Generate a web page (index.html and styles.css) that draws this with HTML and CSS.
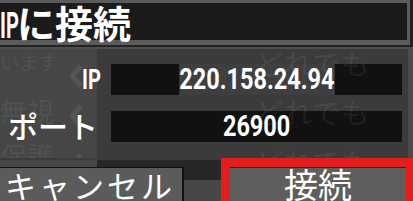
FILE: index.html
```html
<!DOCTYPE html>
<html>
	<head>
		<meta charset="utf-8">
		<title>IPに接続</title>
		<link rel="stylesheet" href="styles.css">
	</head>
	<body>
		<div class="screen">
			<div class="titlebar-wrap">
				<h1 class="titlebar"><span class="latin">IP</span>に接続</h1>
			</div>

			<div class="panel">
				<div class="row">
					<label class="lbl lbl-ip">IP</label>
					<div class="field"><span class="value value-sel">220.158.24.94</span></div>
				</div>
				<div class="row">
					<label class="lbl lbl-port">ポート</label>
					<div class="field"><span class="value">26900</span></div>
				</div>
			</div>

			<!-- menu behind the dialog, showing through -->
			<div class="ghost">
				<span class="g g1">います</span>
				<span class="g g2">無視</span>
				<span class="g g3">保護</span>
				<svg class="chev c1" width="18" height="26" viewBox="0 0 18 26"><polyline points="14,3 5,13 14,23" /></svg>
				<svg class="chev c2" width="18" height="26" viewBox="0 0 18 26"><polyline points="14,3 5,13 14,23" /></svg>
				<svg class="chev c3" width="18" height="26" viewBox="0 0 18 26"><polyline points="14,3 5,13 14,23" /></svg>
				<span class="g any a1">どれでも</span>
				<span class="g any a2">どれでも</span>
				<span class="g any a3">どれでも</span>
			</div>

			<div class="actions">
				<button class="btn btn-cancel">キャンセル</button>
				<button class="btn btn-ok">接続</button>
			</div>
		</div>
	</body>
</html>
```

FILE: styles.css
```css
body {
	margin: 0;
	background-color: #222;
	font-family: "Noto Sans CJK JP", sans-serif;
	color: #fff;
}

.screen {
	position: relative;
	width: 413px;
	height: 201px;
	overflow: hidden;
}

.titlebar-wrap {
	background-color: #222;
	padding: 0 3px 2px 0;
}

.titlebar {
	margin: 0;
	height: 45px;
	box-sizing: border-box;
	border-top: 3px solid #5b5b5b;
	border-right: 3px solid #5b5b5b;
	border-bottom: 5px solid #5b5b5b;
	background-color: #1b1b1b;
	font-size: 38px;
	font-weight: bold;
	line-height: 37px;
	letter-spacing: 0;
	white-space: nowrap;
}

.latin {
	display: inline-block;
	width: 17px;
	font-family: Roboto, sans-serif;
	font-size: 36px;
	transform: scaleX(0.56);
	transform-origin: left center;
}

.panel {
	height: 111px;
	box-sizing: border-box;
	border-top: 2px solid #4e4e4e;
	padding-top: 15px;
	background: linear-gradient(to right, #464646 0 97px, #3b3b3b 97px 408px, #4b4b4b 408px);
}

.row {
	display: grid;
	grid-template-columns: 101px 291px;
	column-gap: 10px;
	height: 31px;
	margin-bottom: 16px;
}

.lbl {
	text-align: right;
	line-height: 31px;
}

.lbl-ip {
	font-family: Roboto, sans-serif;
	font-weight: bold;
	font-size: 28px;
	transform: scaleX(0.72);
	transform-origin: right center;
}

.lbl-port {
	font-size: 30px;
	font-weight: 500;
	line-height: 28px;
	padding-right: 3px;
}

.field {
	background-color: #111;
	text-align: center;
}

.value {
	display: inline-block;
	height: 31px;
	font-family: Roboto, sans-serif;
	font-weight: bold;
	font-size: 29px;
	line-height: 31px;
	transform: scaleX(0.81);
}

.value-sel {
	background-color: #3f3f3f;
}

.ghost {
	position: absolute;
	top: 0;
	left: 0;
	width: 413px;
	height: 201px;
	z-index: 1;
	pointer-events: none;
	color: rgba(255, 255, 255, 0.08);
}

.g {
	position: absolute;
	left: 0;
	line-height: 1;
	white-space: nowrap;
}

.g1 { top: 52px; font-size: 19px; }
.g2 { top: 97px; font-size: 27px; }
.g3 { top: 142px; font-size: 27px; }

.any {
	left: 255px;
	font-size: 28px;
	letter-spacing: 1px;
}

.a1 { top: 49px; }
.a2 { top: 98px; }
.a3 { top: 148px; }

.chev {
	position: absolute;
	left: 67px;
}

.chev polyline {
	fill: none;
	stroke: rgba(255, 255, 255, 0.08);
	stroke-width: 5;
	stroke-linejoin: round;
}

.c1 { top: 63px; }
.c2 { top: 103px; }
.c3 { top: 152px; }

.actions {
	position: relative;
	z-index: 2;
	display: flex;
	align-items: flex-end;
	height: 43px;
	background:
		linear-gradient(to bottom, transparent 22px, #474747 22px),
		linear-gradient(to bottom, #3b3b3b 0 2px, transparent 2px),
		linear-gradient(to right, #464646 0 97px, #272727 97px);
}

.btn {
	padding: 0;
	margin: 0;
	color: #fff;
	font-family: "Noto Sans CJK JP", sans-serif;
	box-sizing: border-box;
	white-space: nowrap;
}

.btn-cancel {
	width: 184px;
	height: 34px;
	border: none;
	border-top: 1px solid #111;
	border-right: 2px solid #111;
	background-color: #5b5b5b;
	font-size: 31px;
	line-height: 32px;
	letter-spacing: 3px;
	text-align: left;
	padding-left: 5px;
	overflow: hidden;
}

.btn-ok {
	margin-left: 37px;
	width: 192px;
	height: 43px;
	border: 9px solid #e11d1d;
	border-right-width: 7px;
	border-bottom: none;
	background-color: #5e5e5e;
	box-shadow: inset 0 1px 0 #262626;
	font-size: 34px;
	line-height: 34px;
	overflow: hidden;
}
```
